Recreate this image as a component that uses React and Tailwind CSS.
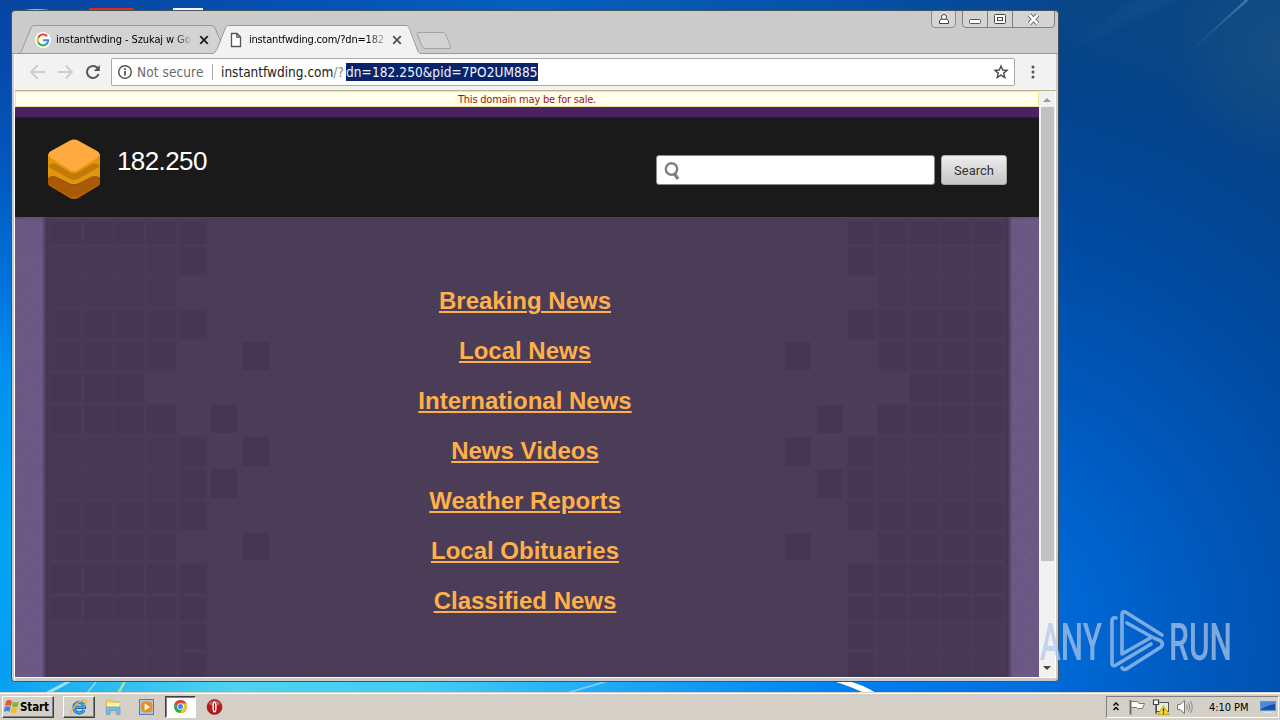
import React from 'react';

const links = [
  'Breaking News',
  'Local News',
  'International News',
  'News Videos',
  'Weather Reports',
  'Local Obituaries',
  'Classified News',
];

// columns: x, width (mirrored for the right side)
const columns = [
  [51, 30],
  [84, 29],
  [115, 29],
  [147, 29],
  [180, 26],
  [211, 26],
  [243, 26],
];

// rows: y, height, filled columns
const rows = [
  [222, 22, [0, 1, 2, 3, 4]],
  [247, 28, [0, 1, 2, 3, 4]],
  [279, 27, [0, 1, 2, 3]],
  [310, 29, [0, 1, 2, 3, 4]],
  [342, 28, [0, 1, 2, 3, 6]],
  [374, 28, [0, 1, 2]],
  [405, 28, [0, 1, 2, 3, 5]],
  [437, 29, [0, 1, 2, 3, 4, 6]],
  [469, 29, [0, 1, 2, 3, 4, 5]],
  [501, 28, [0, 1, 2, 3, 4]],
  [533, 27, [0, 1, 2, 3, 6]],
  [564, 29, [0, 1, 2, 3, 4]],
  [597, 24, [0, 1, 2, 3, 4]],
  [624, 25, [0, 1, 2, 3, 4]],
  [653, 25, [0, 1, 2, 3, 4]],
];

const tones = ['#453651', '#463752', '#473853'];

const Desktop = () => (
  <svg className="absolute inset-0" width="1280" height="720" viewBox="0 0 1280 720">
    <defs>
      <linearGradient id="leftSky" x1="0" y1="0" x2="0" y2="1">
        <stop offset="0" stopColor="#0744a0" />
        <stop offset="0.2" stopColor="#0453b8" />
        <stop offset="0.38" stopColor="#0070d8" />
        <stop offset="0.52" stopColor="#0092ee" />
        <stop offset="0.75" stopColor="#02a4f4" />
        <stop offset="1" stopColor="#0a9cf4" />
      </linearGradient>
      <linearGradient id="topSky" x1="0" y1="0" x2="1" y2="0">
        <stop offset="0" stopColor="#0744a0" />
        <stop offset="0.3" stopColor="#0552b4" />
        <stop offset="0.5" stopColor="#0660be" />
        <stop offset="0.8" stopColor="#0650a8" />
        <stop offset="1" stopColor="#06468f" />
      </linearGradient>
      <radialGradient id="rightSky" gradientUnits="userSpaceOnUse" cx="950" cy="640" r="660">
        <stop offset="0" stopColor="#0074e4" />
        <stop offset="0.2" stopColor="#0067d4" />
        <stop offset="0.42" stopColor="#0057ba" />
        <stop offset="0.65" stopColor="#014aa0" />
        <stop offset="0.85" stopColor="#04438c" />
        <stop offset="1" stopColor="#0a4684" />
      </radialGradient>
      <linearGradient id="bottomSky" x1="0" y1="0" x2="1" y2="0">
        <stop offset="0" stopColor="#08a0f0" />
        <stop offset="0.1" stopColor="#2cbcf0" />
        <stop offset="0.22" stopColor="#4fd2ee" />
        <stop offset="0.4" stopColor="#42ccf4" />
        <stop offset="0.6" stopColor="#1ba4f6" />
        <stop offset="0.8" stopColor="#0080f0" />
        <stop offset="1" stopColor="#006cdc" />
      </linearGradient>
      <linearGradient id="ray" x1="0" y1="1" x2="1" y2="0">
        <stop offset="0" stopColor="#3a78b8" stopOpacity="0" />
        <stop offset="1" stopColor="#5a8cbc" stopOpacity="0.7" />
      </linearGradient>
      <radialGradient id="corner" gradientUnits="userSpaceOnUse" cx="1280" cy="50" r="110">
        <stop offset="0" stopColor="#185084" stopOpacity="0.9" />
        <stop offset="1" stopColor="#185084" stopOpacity="0" />
      </radialGradient>
      <filter id="soften"><feGaussianBlur stdDeviation="4" /></filter>
    </defs>
    <rect width="1280" height="720" fill="url(#rightSky)" />
    <rect width="1060" height="12" fill="url(#topSky)" />
    <rect y="0" width="14" height="720" fill="url(#leftSky)" />
    <rect y="680" width="1060" height="14" fill="url(#bottomSky)" />
    <rect x="1100" width="180" height="200" fill="url(#corner)" />
    <path d="M1178 62 L1245 0 L1249 0 Z" fill="url(#ray)" />
    <path d="M1070 48 L1140 -6 L1190 -6 Z" fill="#1c5a9c" opacity="0.3" filter="url(#soften)" />
    <path d="M44 693 L65 682 L71 682 L51 693 Z" fill="#c8f0fc" opacity="0.75" />
    <path d="M86 693 L95 682 L97 682 L88 693 Z" fill="#b8ecf4" opacity="0.7" />
    <path d="M117 693 L123 682 L126 682 L120 693 Z" fill="#c8e890" opacity="0.8" />
    <path d="M564 693 L604 681 L608 682 L570 693 Z" fill="#a8e4fc" opacity="0.6" />
    <path d="M833 681 L848 681 Q864 685 876 693 L864 693 Q852 687 833 681 Z" fill="#fff" />
    <path d="M24 10 Q36 8 50 10 Z" fill="#aebed8" />
    <rect x="89" y="8" width="45" height="3" rx="1" fill="#dc2c1c" />
    <rect x="173" y="8" width="30" height="3" fill="#f4f8f8" />
  </svg>
);

const GoogleIcon = () => (
  <svg className="shrink-0" width="16" height="16" viewBox="0 0 16 16">
    <circle cx="8" cy="8" r="8" fill="#fff" />
    <path d="M12 4.2 A5.3 5.3 0 0 0 3.2 5.8" fill="none" stroke="#ea4335" strokeWidth="2.1" />
    <path d="M3.2 5.6 A5.3 5.3 0 0 0 3.2 10.6" fill="none" stroke="#fbbc05" strokeWidth="2.1" />
    <path d="M3.2 10.4 A5.3 5.3 0 0 0 11.6 12" fill="none" stroke="#34a853" strokeWidth="2.1" />
    <path d="M8 8.2 H13.2 A5.3 5.3 0 0 1 11.4 12.1" fill="none" stroke="#4285f4" strokeWidth="2.1" />
  </svg>
);

const CloseIcon = ({ color }) => (
  <svg width="10" height="10" viewBox="0 0 10 10">
    <path d="M1.2 1.2 L8.8 8.8 M8.8 1.2 L1.2 8.8" stroke={color} strokeWidth="1.9" />
  </svg>
);

const TitleBar = () => (
  <div className="relative h-[43px] shrink-0">
    <svg className="absolute top-0 left-0" width="1046" height="43" viewBox="12 11 1046 43">
      <path d="M12 53.5 H18 C21 53 22 50 23 47 L31 28 C32 26 33 25.5 35 25.5 H210 C213 25.5 214 26 215 28 L226 53.5 Z" fill="#d3d3d3" stroke="#999" />
      <path d="M12 54 V53.5 H213 C216 52 217 49 218 47 L225 29 C226 26.500 227 25.500 229 25.500 H405 C407 25.500 408 26 409 28 L417 49 C418 52 419 53.500 421 53.500 H1058" fill="#f2f2f2" stroke="#999" />
      <path d="M214.500 54 C217 52 218 49 219 47 L226 29 C227 26.500 228 26 230 26 H405 C407 26 408 27 409 29 L416 49 C417 52 418 53 420 54 Z" fill="#f2f2f2" />
      <path d="M419 32.500 H442 C444 32.500 445 33 446 35 L450 45 C451 48 451 48.500 449 48.500 H426 C424 48.500 423 48 422 46 L417.500 35 C417 33 417 32.500 419 32.500 Z" fill="#d2d2d2" stroke="#a0a49c" />
    </svg>
    <div className="relative flex h-full">
      <div className="mt-[14px] flex h-[30px] w-[197px] items-center pl-[23px]">
        <GoogleIcon />
        <span className="ml-[5px] w-[135px] shrink-0 bg-gradient-to-r from-black from-85% to-[#bbb] bg-clip-text text-[11px] tracking-[-0.1px] whitespace-nowrap text-transparent">
          instantfwding - Szukaj w Go
        </span>
        <span className="ml-[8px] shrink-0"><CloseIcon color="#222" /></span>
      </div>
      <div className="mt-[14px] flex h-[30px] w-[196px] items-center pl-[21px]">
        <svg className="shrink-0" width="12" height="16" viewBox="0 0 12 16">
          <path d="M1.500 1.500 H7 L10.500 5 V14.500 H1.500 Z M6.800 1.500 V5.200 H10.500" fill="#fff" stroke="#555" strokeWidth="1.300" />
        </svg>
        <span className="ml-[7px] w-[135px] shrink-0 bg-gradient-to-r from-black from-85% to-[#bbb] bg-clip-text text-[11px] tracking-[-0.2px] whitespace-nowrap text-transparent">
          instantfwding.com/?dn=182
        </span>
        <span className="ml-[8px] shrink-0"><CloseIcon color="#555" /></span>
      </div>
      <svg className="mr-[2px] ml-auto" width="126" height="18" viewBox="930 11 126 18">
        <path d="M931.500 11 V24 Q931.500 27.500 935 27.500 H952 Q955.500 27.500 955.500 24 V11" fill="#d4d4d4" stroke="#8e8e8e" />
        <path d="M962.500 11 V24 Q962.500 27.500 966 27.500 H1051 Q1054.500 27.500 1054.500 24 V11 M987.500 11 V27 M1012.500 11 V27" fill="#d4d4d4" stroke="#808080" />
        <path d="M939.500 23.500 V21 Q939.500 19.500 942 19 H946 Q948.500 19.500 948.500 21 V23.500 Z" fill="#fff" stroke="#444" />
        <circle cx="944" cy="17" r="2.500" fill="#fff" stroke="#444" />
        <rect x="969.500" y="19.500" width="11" height="4" rx="1" fill="#fff" stroke="#555" />
        <rect x="994.500" y="14.500" width="11" height="9" rx="1" fill="#fff" stroke="#444" />
        <rect x="997.500" y="17.500" width="5" height="3" fill="#fff" stroke="#444" />
        <path d="M1029.500 15 L1037.500 23.500 M1037.500 15 L1029.500 23.500" stroke="#555" strokeWidth="4.400" />
        <path d="M1029.500 15 L1037.500 23.500 M1037.500 15 L1029.500 23.500" stroke="#fff" strokeWidth="2.600" />
      </svg>
    </div>
  </div>
);

const Toolbar = () => (
  <div className="flex h-[36px] shrink-0 items-center bg-[#f2f2f2] pl-[13px]">
    <svg width="74" height="18" viewBox="28 63 74 18">
      <g fill="none" stroke="#cdcdcd" strokeWidth="1.900">
        <path d="M45 72 H31 M37.500 65.500 L31 72 L37.500 78.500" />
        <path d="M58 72 H72 M65.500 65.500 L72 72 L65.500 78.500" />
      </g>
      <path d="M97.500 68 A6 6 0 1 0 98.600 74" fill="none" stroke="#555" strokeWidth="2" />
      <path d="M99.800 65 V71 H93.800 Z" fill="#555" />
    </svg>
    <div className="ml-[9px] flex h-[28px] w-[904px] items-center rounded-[2px] border border-[#a9a9a9] bg-white pl-[5px] text-[13.5px]">
      <svg width="16" height="16" viewBox="0 0 16 16">
        <circle cx="8" cy="8" r="6.300" fill="none" stroke="#555" strokeWidth="1.500" />
        <path d="M8 7 V11.500 M8 4.300 V6" stroke="#555" strokeWidth="1.800" />
      </svg>
      <span className="ml-[4px] w-[69px] tracking-[0.1px] whitespace-nowrap text-[#6a6a6a]">Not secure</span>
      <span className="ml-[6px] h-[16px] w-px bg-[#aaa]" />
      <span className="ml-[8px] w-[125px] whitespace-nowrap text-[#222]">instantfwding.com<span className="text-[#888]">/?</span></span>
      <span className="h-[18px] w-[192px] bg-[#0a246a] leading-[18px] tracking-[0.1px] whitespace-nowrap text-[#f0f4ff]">dn=182.250&amp;pid=7PO2UM885</span>
      <svg className="mr-[5px] ml-auto" width="16" height="16" viewBox="0 0 16 16">
        <path d="M8 2 L9.700 6 L14 6.300 L10.700 9.100 L11.800 13.500 L8 11.100 L4.200 13.500 L5.300 9.100 L2 6.300 L6.300 6 Z" fill="none" stroke="#4a4a4a" strokeWidth="1.400" />
      </svg>
    </div>
    <svg className="ml-[16px]" width="4" height="14" viewBox="0 0 4 14">
      <circle cx="2" cy="2" r="1.500" fill="#555" />
      <circle cx="2" cy="7" r="1.500" fill="#555" />
      <circle cx="2" cy="12" r="1.500" fill="#555" />
    </svg>
  </div>
);

const Logo = () => (
  <svg width="54" height="62" viewBox="47 138 54 62">
    <path d="M48 164 H100 V183 Q100 185 98 186 L78 198 Q74 200 70 198 L50 186 Q48 185 48 183 Z" fill="#9c5206" />
    <path d="M48 183 L68 194 Q74 197 80 194 L100 183 Q100 185 98 186 L78 198 Q74 200 70 198 L50 186 Q48 185 48 183 Z" fill="#b46404" />
    <path d="M48 180 Q51 175 55 177 L70 185 Q74 187 78 185 L93 177 Q97 175 100 180 V183 L80 195 Q74 198 68 195 L48 183 Z" fill="#a85a06" />
    <path d="M48 154 H100 V178 Q97 175 92 176.500 L79 183 Q74 185.500 69 183 L56 176.500 Q51 175 48 178 Z" fill="#e4960a" />
    <path d="M48 166 Q52 162 57 164.500 L70 172.500 Q74 174.500 78 172.500 L91 164.500 Q96 162 100 166 L97 168.500 L78 179 Q74 181 70 179 L51 168.500 Z" fill="#c07a0c" />
    <path d="M51 151 L70 140.500 Q74 138.500 78 140.500 L97 151 Q102 154 97 158 L78 170 Q74 172.500 70 170 L51 158 Q46 154 51 151 Z" fill="#ffab40" />
  </svg>
);

const Pattern = () => (
  <svg className="absolute inset-0" width="1024" height="460" viewBox="15 217 1024 460">
    <defs>
      <linearGradient id="edge" x1="0" y1="0" x2="1" y2="0">
        <stop offset="0" stopColor="#6a5682" />
        <stop offset="0.45" stopColor="#4a3b58" />
        <stop offset="0.65" stopColor="#433450" />
        <stop offset="1" stopColor="#493a55" />
      </linearGradient>
      <filter id="grain" x="0" y="0" width="1" height="1">
        <feTurbulence type="fractalNoise" baseFrequency="0.45" numOctaves="2" seed="4" />
        <feColorMatrix values="0 0 0 0 0.3  0 0 0 0 0.22  0 0 0 0 0.42  0.9 0 0 0 -0.28" />
      </filter>
      <linearGradient id="headShade" x1="0" y1="0" x2="0" y2="1">
        <stop offset="0" stopColor="#554760" />
        <stop offset="1" stopColor="#4b3c58" stopOpacity="0" />
      </linearGradient>
      <g id="cells">
        <rect x="48" y="217" width="160" height="460" fill="#493a55" />
        <rect x="177" y="276" width="32" height="32" fill="#4b3c58" />
        <rect x="177" y="340" width="32" height="31" fill="#4b3c58" />
        <rect x="145" y="372" width="64" height="31" fill="#4b3c58" />
        <rect x="177" y="403" width="32" height="32" fill="#4b3c58" />
        <rect x="177" y="531" width="32" height="31" fill="#4b3c58" />
        {rows.map(([y, h, cols], r) =>
          cols.map((c) => (
            <rect
              key={`${r}-${c}`}
              x={columns[c][0]}
              y={y}
              width={columns[c][1]}
              height={h}
              fill={tones[c > 3 ? 0 : (r * 2 + c * 3 + (r >> 1)) % 3]}
            />
          ))
        )}
      </g>
    </defs>
    <rect x="15" y="217" width="1024" height="460" fill="#4b3c58" />
    <use href="#cells" />
    <use href="#cells" transform="translate(1054 0) scale(-1 1)" />
    <g>
      <rect x="15" y="217" width="29" height="460" fill="#6a5682" />
      <rect x="1010" y="217" width="29" height="460" fill="#6a5682" />
      <rect x="15" y="217" width="28" height="460" filter="url(#grain)" opacity="0.3" />
      <rect x="1012" y="217" width="27" height="460" filter="url(#grain)" opacity="0.3" />
    </g>
    <rect x="42" y="217" width="8" height="460" fill="url(#edge)" />
    <rect x="-1012" y="217" width="8" height="460" fill="url(#edge)" transform="scale(-1 1)" />
    <rect x="15" y="217" width="1024" height="3" fill="url(#headShade)" opacity="0.4" />
  </svg>
);

const ParkedPage = () => (
  <div className="flex w-[1024px] flex-col">
    <div className="flex h-[16px] items-center justify-center border border-[#efe3a0] bg-[#ffffec] text-[11px] text-[#9c1414]">
      <span className="pt-[2px] leading-[14px] tracking-[-0.2px] whitespace-nowrap">This domain may be for sale.</span>
    </div>
    <div className="h-[10px] bg-[#4a2460]" />
    <div className="flex h-[100px] border-t border-[#2c1a34] bg-[#1a1a1a] pl-[32px] font-['Liberation_Sans',sans-serif]">
      <div className="mt-[20px]"><Logo /></div>
      <span className="mt-[26px] ml-[16px] text-[26px] leading-[34px] tracking-[-0.6px] text-white">182.250</span>
      <div className="mt-[37px] mr-[32px] ml-auto flex h-[30px] gap-[6px]">
        <div className="flex w-[279px] items-center rounded-[3px] border border-[#888] bg-white pl-[7px]">
          <svg width="18" height="20" viewBox="0 0 18 20">
            <circle cx="7.500" cy="9" r="5.700" fill="none" stroke="#808080" strokeWidth="2.400" />
            <path d="M10 13 L14 19" stroke="#808080" strokeWidth="3.200" />
          </svg>
        </div>
        <button className="w-[66px] rounded-[3px] border border-[#aaa] bg-gradient-to-b from-[#eeeeee] to-[#c6c6c6] pt-px font-[Roboto,sans-serif] text-[13px] text-[#333]">Search</button>
      </div>
    </div>
    <div className="relative h-[460px]">
      <Pattern />
      <div className="relative flex flex-col items-center pt-[59px] pr-[4px] font-['Liberation_Sans',sans-serif]">
        {links.map((label) => (
          <a key={label} className="h-[50px] text-[24px] leading-[50px] font-bold text-[#ffb04a] underline decoration-2 underline-offset-[2px]">{label}</a>
        ))}
      </div>
    </div>
  </div>
);

const Scrollbar = () => (
  <div className="flex w-[16px] flex-col items-center bg-[#f1f1f1]">
    <svg width="16" height="16" viewBox="0 0 16 16">
      <path d="M4 11 L8 7 L12 11 Z" fill="#999" />
    </svg>
    <div className="h-[454px] w-[13px] bg-[#c1c1c1]" />
    <svg className="mt-auto" width="16" height="16" viewBox="0 0 16 16">
      <path d="M4 5 L8 9 L12 5 Z" fill="#444" />
    </svg>
  </div>
);

const ChromeWindow = () => (
  <div className="absolute top-[10px] left-[11px] flex h-[672px] w-[1048px] flex-col overflow-hidden rounded-[4px] border border-[#44545c] bg-[#cbcbcb]">
    <TitleBar />
    <div className="mx-[2px] flex flex-1 flex-col border-l border-white">
      <Toolbar />
      <div className="h-px bg-[#b8b48c]" />
      <div className="flex h-[587px] border-b border-white bg-white">
        <ParkedPage />
        <Scrollbar />
      </div>
    </div>
  </div>
);

const Watermark = () => (
  <svg className="absolute top-[600px] left-[1030px]" width="250" height="84" viewBox="1030 600 250 84">
    <g fill="#b0c8e8" opacity="0.72" fontFamily="Roboto, sans-serif" fontSize="52" fontWeight="500">
      <text x="1040" y="659.500" textLength="62" lengthAdjust="spacingAndGlyphs">ANY</text>
      <text x="1169" y="659.500" textLength="63" lengthAdjust="spacingAndGlyphs">RUN</text>
    </g>
    <g fill="none" stroke="#a4c4ec" strokeWidth="3.600" strokeLinejoin="round" strokeLinecap="round" opacity="0.75">
      <path d="M1116 618 Q1112 617 1112 621 V663 Q1112 667 1116 665 L1151 644" />
      <path d="M1162 635 L1127 613 Q1122 610 1122 615 V654 L1152 637 L1127 623" />
      <path d="M1122 668 Q1124 671 1128 668 L1161 647 Q1164 644 1161 641 L1154 638" />
    </g>
  </svg>
);

const Taskbar = () => (
  <div className="absolute bottom-0 left-0 flex h-[28px] w-full items-center border-t border-[#d4d0c8] bg-[#d4d0c8] shadow-[inset_0_1px_0_#fff]">
    <div className="ml-[2px] flex h-[22px] w-[52px] items-center border border-t-white border-r-[#404040] border-b-[#404040] border-l-white pl-px shadow-[inset_-1px_-1px_0_#808080]">
      <svg width="16" height="15" viewBox="0 0 15 14">
        <path d="M2 2 Q5 0 7.500 2 L6.500 6.500 Q4 5 1 6.500 Z" fill="#e8562c" />
        <path d="M8.500 2.300 Q11 4 14 2.300 L12.800 7 Q10 8.500 7.500 7 Z" fill="#7cb83c" />
        <path d="M0.800 7.500 Q3.500 6 6.200 7.500 L5 12 Q3 10.500 0 12 Z" fill="#3f86dc" />
        <path d="M7.200 8 Q10 9.500 12.500 8 L11.300 12.500 Q8.500 14 6 12.500 Z" fill="#f4bc2c" />
      </svg>
      <span className="pt-px text-[11.5px] leading-[14px] font-bold tracking-[-0.1px] text-black">Start</span>
    </div>
    <div className="ml-[9px] flex h-[22px] w-[32px] items-center justify-center border border-t-white border-r-[#404040] border-b-[#404040] border-l-white shadow-[inset_-1px_-1px_0_#808080]">
      <svg width="18" height="18" viewBox="0 0 18 18">
        <path d="M14 12 A5.300 5.300 0 1 1 14.500 9.300 H5" fill="none" stroke="#1c70c8" strokeWidth="3.200" />
        <path d="M14 12 A5.300 5.300 0 1 1 14.500 9.300 H5" fill="none" stroke="#48a8ec" strokeWidth="1.400" />
        <path d="M2 16 C0 13 7 3 14 2 C17 1 17 4 14.500 7" fill="none" stroke="#f0b828" strokeWidth="1.300" />
      </svg>
    </div>
    <svg className="ml-[9px]" width="18" height="18" viewBox="0 0 18 18">
      <path d="M2 2 H7 L8.500 3.500 H15 V14 H2 Z" fill="#ecd270" stroke="#c8ac50" strokeWidth="0.600" />
      <path d="M3 5 H15.500 V9 H3 Z" fill="#fcf0a8" />
      <path d="M2.500 9 H16 V16.500 H12.500 V12.500 H6 V16.500 H2.500 Z" fill="#76b8e4" stroke="#5c9cc8" strokeWidth="0.700" />
    </svg>
    <svg className="ml-[16px]" width="18" height="18" viewBox="0 0 18 18">
      <rect x="1.500" y="1.500" width="14" height="15" fill="#a8c8e8" stroke="#4c80b4" />
      <rect x="3" y="3.500" width="11.500" height="11" rx="4" fill="#f08c1c" />
      <path d="M6.700 5.500 L12 9 L6.700 12.500 Z" fill="#fff" />
    </svg>
    <div className="ml-[9px] flex h-[22px] w-[31px] items-center justify-center border border-t-[#404040] border-r-white border-b-white border-l-[#404040] bg-white shadow-[inset_1px_1px_0_#808080]">
      <svg width="15" height="15" viewBox="0 0 16 16">
        <circle cx="8" cy="8" r="7" fill="#34a853" />
        <path d="M2 4.300 A7 7 0 0 1 14.200 4.800 H8 L5 9.500 Z" fill="#e04434" />
        <path d="M14.200 4.800 A7 7 0 0 1 7.500 15 L11 9.200 L8 4.800 Z" fill="#fbc424" />
        <circle cx="8" cy="8" r="3.500" fill="#fff" />
        <circle cx="8" cy="8" r="2.700" fill="#4285f4" />
      </svg>
    </div>
    <svg className="ml-[10px]" width="17" height="17" viewBox="0 0 17 17">
      <circle cx="8.500" cy="9" r="7.500" fill="#b81818" stroke="#841010" strokeWidth="0.600" />
      <path d="M2.500 6 A6.800 6.800 0 0 1 14.500 6 Q8.500 9 2.500 6 Z" fill="#e47870" opacity="0.7" />
      <ellipse cx="8.500" cy="9" rx="1.400" ry="4.800" fill="#a01010" stroke="#fff" strokeWidth="1.500" />
    </svg>
    <div className="mr-px ml-auto flex h-[22px] w-[173px] items-center border border-t-[#808080] border-r-white border-b-white border-l-[#808080] pl-[5px]">
      <svg width="8" height="12" viewBox="0 0 8 12">
        <path d="M1.500 4.500 L4 2 L6.500 4.500 M1.500 9 L4 6.500 L6.500 9" fill="none" stroke="#000" strokeWidth="1.400" />
      </svg>
      <svg className="ml-[8px]" width="18" height="18" viewBox="0 0 18 18">
        <path d="M3.500 3.500 H10 L11 5.500 H16.500 L14.500 10.500 H9.500 L8.500 9.500 H3.500" fill="#fff" stroke="#777" />
        <path d="M2.500 2 V16.500" stroke="#666" strokeWidth="1.800" />
      </svg>
      <svg className="ml-[6px]" width="18" height="18" viewBox="0 0 18 18">
        <rect x="4.500" y="4.500" width="12" height="9" fill="#e8ecd8" stroke="#555" />
        <path d="M1.500 2 V6.500 H6.500 V2 Z M4 6.500 V16" fill="#fff" stroke="#444" strokeWidth="1.200" />
        <path d="M11.500 7.500 L17 16.500 H6 Z" fill="#fcd820" stroke="#b8960c" strokeWidth="0.700" />
        <path d="M11.500 10.500 V13.500 M11.500 14.500 V15.700" stroke="#222" strokeWidth="1.300" />
      </svg>
      <svg className="ml-[6px]" width="18" height="16" viewBox="0 0 18 16">
        <path d="M1.500 5.500 H4 L8.500 1.500 V14.500 L4 10.500 H1.500 Z" fill="#fff" stroke="#777" />
        <path d="M10.500 5.500 Q12 8 10.500 10.500 M12.500 3.500 Q15 8 12.500 12.500 M14.500 2 Q18 8 14.500 14" fill="none" stroke="#888" />
      </svg>
      <span className="ml-[15px] w-[42px] pt-[2px] text-[11px] leading-[14px] tracking-[-0.05px] whitespace-nowrap text-black">4:10 PM</span>
      <svg className="ml-[9px]" width="16" height="14" viewBox="0 0 16 14">
        <rect x="0.500" y="1.500" width="15" height="9" fill="#1850b0" stroke="#6c90c0" />
        <path d="M1 2 H15 V4 Q8 5 1 9 Z" fill="#4c88dc" />
        <path d="M4 12.500 H12" stroke="#d8e4f0" />
      </svg>
    </div>
  </div>
);

const App = () => {
  return (
    <div className="relative h-[720px] w-[1280px] overflow-hidden bg-[#004aa8] font-['DejaVu_Sans_Condensed','DejaVu_Sans',sans-serif]">
      <Desktop />
      <ChromeWindow />
      <Taskbar />
      <Watermark />
    </div>
  );
};

export default App;
